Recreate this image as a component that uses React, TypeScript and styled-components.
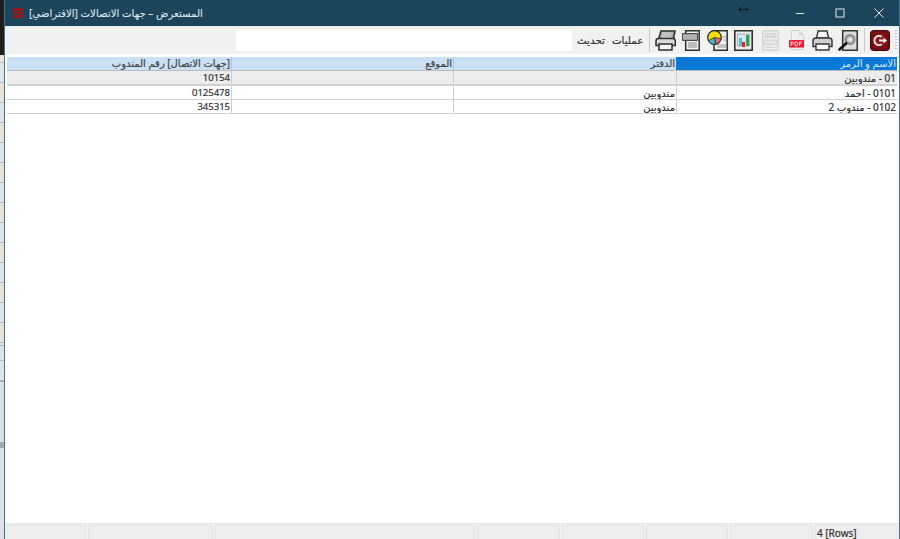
import styled, { createGlobalStyle } from "styled-components";

const rows = [
  { name: "01 - مندوبين", book: "", place: "", phone: "10154", group: true },
  { name: "0101 - احمد", book: "مندوبين", place: "", phone: "0125478", group: false },
  { name: "0102 - مندوب 2", book: "مندوبين", place: "", phone: "345315", group: false },
];

const statusCells = [82, 83, 82, 82, 83, 260, 125, 82];

const GlobalStyle = createGlobalStyle`
  html, body {
    margin: 0;
    padding: 0;
    height: 100%;
    overflow: hidden;
  }
  #root {
    height: 100%;
  }
`;

function SlantedPrinterIcon() {
  return (
    <svg width="21" height="21" viewBox="0 0 21 21">
      <path d="M6 1h14l-1.500 8H3.500z" fill="#a9a9a9" stroke="#2f2f2f" strokeWidth="1.500" />
      <path d="M7.500 3h9M7 5h9.500M6.500 7h10" stroke="#e2e2e2" strokeWidth="0.900" />
      <path d="M1 11c0-1.500 1-2.500 2.500-2.500H18c1.500 0 2.300 1 2.300 2.500v4.500H1z" fill="#dadada" stroke="#2f2f2f" strokeWidth="1.500" />
      <path d="M4 14h13v6H4z" fill="#f7f7f7" stroke="#2f2f2f" strokeWidth="1.500" />
    </svg>
  );
}

function PrinterIcon() {
  return (
    <svg width="21" height="21" viewBox="0 0 21 21">
      <path d="M6 1h9l1.500 7h-12z" fill="#f7f7f7" stroke="#3a3a3a" strokeWidth="1.400" />
      <path d="M1 11c0-1.800 1-3 2.800-3h13.400c1.800 0 2.800 1.200 2.800 3v5.500H1z" fill="#cfcfcf" stroke="#3a3a3a" strokeWidth="1.500" />
      <path d="M4 14h13v6H4z" fill="#fbfbfb" stroke="#3a3a3a" strokeWidth="1.400" />
    </svg>
  );
}

function BarcodePageIcon() {
  return (
    <svg width="18" height="21" viewBox="0 0 18 21">
      <path d="M3.700 0.800h13.500v19.400H3.700z" fill="#f2f2f2" stroke="#2f2f2f" strokeWidth="1.500" />
      <path d="M0.500 3.500h15v7h-15z" fill="#8b8b8b" stroke="#4a4a4a" />
      <path d="M2 4.500v5M4 4.500v5M6 4.500v5M8 4.500v5M10 4.500v5M12 4.500v5M14 4.500v5" stroke="#e2e2e2" strokeWidth="0.900" />
      <path d="M6 13h9M6 15h9M6 17h9" stroke="#7a7a7a" strokeWidth="0.900" />
    </svg>
  );
}

function PieReportIcon() {
  return (
    <svg width="21" height="21" viewBox="0 0 21 21">
      <path d="M7 0.800h13.200v19.400H7z" fill="#f2f2f2" stroke="#2f2f2f" strokeWidth="1.500" />
      <path d="M16 7h3M16 10h3M10 15h9M10 17h9" stroke="#888" strokeWidth="0.900" />
      <circle cx="7.500" cy="7.500" r="6.800" fill="#f2dc10" stroke="#222" strokeWidth="1.200" />
      <path d="M7.500 7.500l6.600 1.300A6.800 6.800 0 0 1 8.500 14.300z" fill="#e66a78" stroke="#222" strokeWidth="0.700" />
      <path d="M7.500 7.500L8.500 14.300A6.800 6.800 0 0 1 1.500 10.700z" fill="#41b8c4" stroke="#222" strokeWidth="0.700" />
    </svg>
  );
}

function ChartReportIcon() {
  return (
    <svg width="19" height="21" viewBox="0 0 19 21">
      <path d="M0.800 0.800h17.400v19.400H0.800z" fill="#ededed" stroke="#2f2f2f" strokeWidth="1.600" />
      <path d="M3.500 4h12v12h-12z" fill="#d3e9f4" stroke="#8a8a8a" strokeWidth="0.600" />
      <path d="M5 8h3v8H5z" fill="#62b6d6" />
      <path d="M8 12h3v5H8z" fill="#e3242b" />
      <path d="M12 5h3v11h-3z" fill="#2aa84a" />
    </svg>
  );
}

function FadedPageIcon() {
  return (
    <svg width="17" height="21" viewBox="0 0 17 21">
      <path d="M0.800 0.800h15.400v19.400H0.800z" fill="#efefef" stroke="#d0d0d0" strokeWidth="1.200" />
      <path d="M3 3.500h11v4H3z" fill="#dedede" stroke="#c8c8c8" strokeWidth="0.600" />
      <path d="M2 10h13v5H2z" fill="#e6e6e6" stroke="#c8c8c8" strokeWidth="0.600" />
      <path d="M4 17.500h9" stroke="#d0d0d0" />
    </svg>
  );
}

function PdfIcon() {
  return (
    <svg width="15" height="20" viewBox="0 0 15 20">
      <path d="M2.500 0.500h8l4 4v15h-12z" fill="#f0f0f0" stroke="#d4d4d4" />
      <path d="M10.500 0.500v4h4" fill="#e0e0e0" stroke="#d4d4d4" />
      <rect x="0" y="10" width="15" height="7.500" rx="1" fill="#f0162e" />
      <path d="M2 15.800v-4h1.500a1 1 0 0 1 0 2.200H2M6 11.800v4h1a2 2 0 0 0 0-4zM10.500 15.800v-4h2.500M10.500 13.600h2" fill="none" stroke="#fff" strokeWidth="0.800" />
    </svg>
  );
}

function PreviewIcon() {
  return (
    <svg width="20" height="21" viewBox="0 0 20 21">
      <path d="M4.700 0.800h14.500v19.400H4.700z" fill="#dcdcdc" stroke="#333" strokeWidth="1.500" />
      <circle cx="12" cy="9.500" r="4.400" fill="#c2c2c2" stroke="#8a8a8a" strokeWidth="2.200" />
      <circle cx="12" cy="9.500" r="1.700" fill="#ededed" />
      <path d="M8 13.500L1.500 19.500" stroke="#111" strokeWidth="2.600" strokeLinecap="round" />
    </svg>
  );
}

function ExitIcon() {
  return (
    <svg width="20" height="21" viewBox="0 0 20 21">
      <defs>
        <radialGradient id="exitFill" cx="0.5" cy="0.45" r="0.65">
          <stop offset="0" stopColor="#9c1a20" />
          <stop offset="1" stopColor="#640a0f" />
        </radialGradient>
      </defs>
      <rect x="0.500" y="0.500" width="19" height="20" rx="3" fill="url(#exitFill)" stroke="#430407" />
      <path d="M11.800 6.800a4.600 4.600 0 1 0 0 7.400" fill="none" stroke="#f4eeee" strokeWidth="2" />
      <path d="M9 10.500h5.500" stroke="#f4eeee" strokeWidth="2" />
      <path d="M13.500 7.500l3.500 3-3.500 3z" fill="#f4eeee" />
    </svg>
  );
}

function AppLogo() {
  return (
    <svg width="12" height="12" viewBox="0 0 12 12">
      <path d="M1 1h10v3H4.500v1H11v6H1V8h6.500V7H1z" fill="#93171f" />
    </svg>
  );
}

export default function App() {
  return (
    <Desktop>
      <GlobalStyle />
      <Window>
        <TitleBar>
          <LogoSlot>
            <AppLogo />
          </LogoSlot>
          <TitleText dir="rtl">المستعرض – جهات الاتصالات [الافتراضي]</TitleText>
          <Spacer />
          <ResizeCursor width="11" height="7" viewBox="0 0 11 7">
            <path d="M0.500 3.500L3 1v5zM10.500 3.500L8 1v5z" fill="#1a1a1a" />
            <path d="M2 3.500h7" stroke="#1a1a1a" />
          </ResizeCursor>
          <CaptionButton aria-label="minimize">
            <svg width="10" height="10" viewBox="0 0 10 10">
              <path d="M1 5.500h8" stroke="#dfe6ea" />
            </svg>
          </CaptionButton>
          <CaptionButton aria-label="maximize">
            <svg width="10" height="10" viewBox="0 0 10 10">
              <rect x="1" y="1" width="8" height="8" fill="none" stroke="#dfe6ea" />
            </svg>
          </CaptionButton>
          <CaptionButton aria-label="close">
            <svg width="10" height="10" viewBox="0 0 10 10">
              <path d="M0.500 0.500l9 9M9.500 0.500l-9 9" stroke="#dfe6ea" />
            </svg>
          </CaptionButton>
        </TitleBar>

        <Toolbar>
          <SearchBox />
          <MenuLabel $gap={5}>تحديث</MenuLabel>
          <MenuLabel $gap={7}>عمليات</MenuLabel>
          <Separator $gap={6} />
          <ToolIcon $gap={5}>
            <SlantedPrinterIcon />
          </ToolIcon>
          <ToolIcon $gap={6}>
            <BarcodePageIcon />
          </ToolIcon>
          <ToolIcon $gap={7}>
            <PieReportIcon />
          </ToolIcon>
          <ToolIcon $gap={6}>
            <ChartReportIcon />
          </ToolIcon>
          <ToolIcon $gap={9}>
            <FadedPageIcon />
          </ToolIcon>
          <ToolIcon $gap={10}>
            <PdfIcon />
          </ToolIcon>
          <ToolIcon $gap={8}>
            <PrinterIcon />
          </ToolIcon>
          <ToolIcon $gap={5}>
            <PreviewIcon />
          </ToolIcon>
          <Separator $gap={6} />
          <ToolIcon $gap={5}>
            <ExitIcon />
          </ToolIcon>
          <Grip />
        </Toolbar>

        <Grid dir="rtl">
          <HeaderRow>
            <HeaderCell $active>الاسم و الرمز</HeaderCell>
            <HeaderCell>الدفتر</HeaderCell>
            <HeaderCell>الموقع</HeaderCell>
            <HeaderCell>[جهات الاتصال] رقم المندوب</HeaderCell>
          </HeaderRow>
          {rows.map((row) => (
            <DataRow key={row.name} $group={row.group}>
              <DataCell>{row.name}</DataCell>
              <DataCell>{row.book}</DataCell>
              <DataCell>{row.place}</DataCell>
              <DataCell $numeric>{row.phone}</DataCell>
            </DataRow>
          ))}
        </Grid>

        <StatusBar dir="rtl">
          {statusCells.map((width, i) => (
            <StatusCell key={i} $width={width} dir="ltr">
              {i === 0 ? "4 [Rows]" : ""}
            </StatusCell>
          ))}
        </StatusBar>
      </Window>
    </Desktop>
  );
}

const Desktop = styled.div`
  display: flex;
  height: 100%;
  padding-left: 4px;
  box-sizing: border-box;
  background:
    linear-gradient(#1d1d1d 0 55px, transparent 55px),
    linear-gradient(transparent 0 345px, #b9bfc4 345px 346px, #e2e3e6 346px 360px, #b9bfc4 360px 361px, #e2e3e6 361px 380px, #a8acb0 380px 382px, #dcdde0 382px 442px, #a8acb0 442px 448px, #e0e1e4 448px),
    repeating-linear-gradient(#e9e3da 0 19px, #b9bfc4 19px 20px, #e3e4e7 20px 39px, #b9bfc4 39px 40px);
  background-position: 0 0, 0 0, 0 3px;
  font-family: "Noto Sans", "Open Sans", "DejaVu Sans", sans-serif;
`;

const Window = styled.div`
  flex: 1;
  display: flex;
  flex-direction: column;
  min-width: 0;
  background: #fff;
  border-left: 1px solid #3f7590;
  border-right: 1px solid #3f7590;
`;

const TitleBar = styled.div`
  position: relative;
  display: flex;
  align-items: center;
  flex: 0 0 26px;
  background: #1c455c;
  color: #dfe6ea;
`;

const LogoSlot = styled.div`
  display: flex;
  margin-left: 7px;
  margin-right: 5px;
`;

const TitleText = styled.div`
  font-size: 10.2px;
  white-space: nowrap;
  -webkit-text-stroke: 0.1px #dfe6ea;
`;

const Spacer = styled.div`
  flex: 1;
`;

const ResizeCursor = styled.svg`
  position: absolute;
  left: 733px;
  top: 6px;
`;

const CaptionButton = styled.div`
  display: flex;
  align-items: center;
  justify-content: center;
  width: 39.5px;
  height: 26px;
`;

const Toolbar = styled.div`
  display: flex;
  align-items: center;
  flex: 0 0 28px;
  padding-left: 231px;
  padding-bottom: 1px;
  box-sizing: border-box;
  background: #f1f1f1;
  border-top: 1px solid #e8edf0;
`;

const SearchBox = styled.div`
  width: 336px;
  height: 21px;
  background: #fff;
`;

const MenuLabel = styled.div<{ $gap: number }>`
  margin-left: ${(p) => p.$gap}px;
  font-size: 10.3px;
  color: #333;
  white-space: nowrap;
  -webkit-text-stroke: 0.2px #333;
`;

const Separator = styled.div<{ $gap: number }>`
  flex: none;
  width: 1px;
  height: 24px;
  margin-left: ${(p) => p.$gap}px;
  background: #c9c9c9;
`;

const ToolIcon = styled.div<{ $gap: number }>`
  display: flex;
  flex: none;
  margin-left: ${(p) => p.$gap}px;
`;

const Grip = styled.div`
  flex: none;
  width: 2px;
  height: 20px;
  margin-left: 5px;
  background: repeating-linear-gradient(#c8c8c8 0 1px, transparent 1px 3px);
`;

const Grid = styled.div`
  flex: 1;
  padding: 3px 2px 0;
  font-size: 10px;
  color: #333;
  -webkit-text-stroke: 0.2px #333;
`;

const HeaderRow = styled.div`
  display: grid;
  grid-template-columns: 221px 223px 222px 224px;
  height: 14px;
  box-sizing: border-box;
  background: #cae1f5;
  border-bottom: 1px solid #bdbdbd;
`;

const HeaderCell = styled.div<{ $active?: boolean }>`
  padding: 0 1px;
  line-height: 13px;
  overflow: hidden;
  white-space: nowrap;
  background: ${(p) => (p.$active ? "#0a78d7" : "transparent")};
  color: ${(p) => (p.$active ? "#d6e9fa" : "#444")};
  -webkit-text-stroke: ${(p) => (p.$active ? "0" : "0.2px #444")};
  border-left: ${(p) => (p.$active ? "none" : "1px solid #b4c2cf")};
  &:last-child {
    border-left: none;
  }
`;

const DataRow = styled.div<{ $group: boolean }>`
  display: grid;
  grid-template-columns: 221px 223px 222px 224px;
  height: ${(p) => (p.$group ? 15 : 14)}px;
  box-sizing: border-box;
  background: ${(p) => (p.$group ? "#ececec" : "#fff")};
  border-bottom: ${(p) => (p.$group ? "2px" : "1px")} solid #d2d2d2;
`;

const DataCell = styled.div<{ $numeric?: boolean }>`
  padding: 0 1px;
  font-size: ${(p) => (p.$numeric ? "9.5px" : "10px")};
  line-height: 14px;
  overflow: hidden;
  white-space: nowrap;
  border-left: 1px solid #cfcfcf;
  &:last-child {
    border-left: none;
  }
`;

const StatusBar = styled.div`
  display: flex;
  flex: 0 0 16px;
  gap: 2px;
  padding: 1px 2px 0 1px;
  box-sizing: border-box;
  overflow: hidden;
  background: #f0f0f0;
  border-top: 1px solid #e6e6e6;
`;

const StatusCell = styled.div<{ $width: number }>`
  flex: 0 0 ${(p) => p.$width}px;
  height: 16px;
  padding-left: 1px;
  box-sizing: border-box;
  font-size: 10px;
  line-height: 14px;
  color: #333;
  -webkit-text-stroke: 0.2px #333;
  background: #eeeeee;
  border-top: 1px solid #e4e4e4;
  border-left: 1px solid #e4e4e4;
  border-right: 1px solid #e4e4e4;
`;
